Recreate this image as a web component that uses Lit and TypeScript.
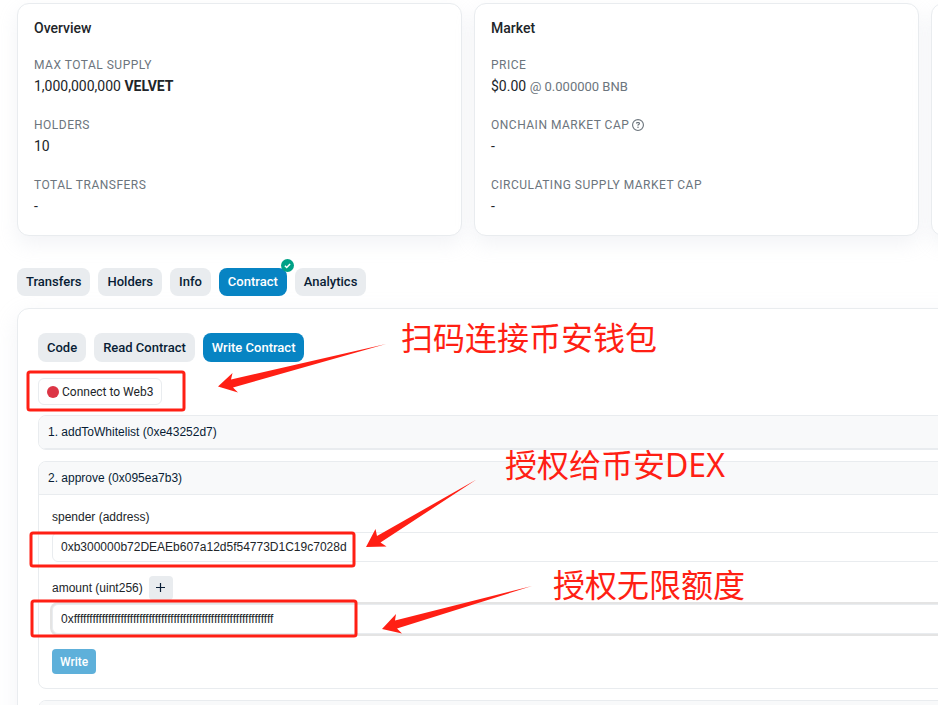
import { LitElement, html, css, svg } from "lit";
import { customElement, property, state } from "lit/decorators.js";
import { classMap } from "lit/directives/class-map.js";

interface Fact {
  label: string;
  value: unknown;
  help?: boolean;
}

const overview: Fact[] = [
  { label: "MAX TOTAL SUPPLY", value: html`1,000,000,000 <b>VELVET</b>` },
  { label: "HOLDERS", value: "10" },
  { label: "TOTAL TRANSFERS", value: "-" },
];

const market: Fact[] = [
  { label: "PRICE", value: html`$0.00 <small>@ 0.000000 BNB</small>` },
  { label: "ONCHAIN MARKET CAP", value: "-", help: true },
  { label: "CIRCULATING SUPPLY MARKET CAP", value: "-" },
];

@customElement("fact-card")
export class FactCard extends LitElement {
  @property() heading = "";
  @property({ attribute: false }) facts: Fact[] = [];

  static styles = css`
    :host {
      display: block;
      box-sizing: border-box;
      min-height: 233px;
      padding: 14px 16px;
      background: #fff;
      border: 1px solid #e9ecef;
      border-radius: 12px;
      box-shadow: 0 8px 19px rgba(189, 197, 209, 0.2);
    }
    .heading {
      margin: 0 0 18px;
      font-size: 14px;
      line-height: 20px;
      font-weight: 500;
    }
    .facts {
      display: grid;
      gap: 18px;
      margin: 0;
    }
    .label {
      display: flex;
      align-items: center;
      gap: 3px;
      font-size: 12px;
      line-height: 18px;
      letter-spacing: 0.5px;
      color: #6c757d;
    }
    .value {
      margin: 0;
      font-size: 14px;
      line-height: 24px;
    }
    .value small {
      font-size: 13px;
      line-height: 1;
      color: #6c757d;
    }
    .help {
      width: 12px;
      height: 12px;
    }
  `;

  render() {
    return html`
      ${this.heading ? html`<h3 class="heading">${this.heading}</h3>` : ""}
      <dl class="facts">
        ${this.facts.map(
          (f) => html`<div>
            <dt class="label">
              ${f.label}
              ${f.help
                ? html`<svg class="help" viewBox="0 0 512 512" fill="currentColor" aria-hidden="true">
                    <path fill-rule="evenodd" d="M256 0a256 256 0 1 0 0 512 256 256 0 0 0 0-512zm0 464a208 208 0 1 1 0-416 208 208 0 0 1 0 416z" />
                    <path d="M169 165c8-22 29-37 53-37h58c35 0 63 28 63 63 0 22-12 43-31 55l-32 19c0 13-11 23-24 23s-24-11-24-24v-13c0-9 5-17 12-21l44-25c5-3 8-8 8-14 0-9-7-15-15-15h-58c-3 0-6 2-8 5l-1 1c-4 12-18 19-30 14s-19-18-15-30zM224 352a32 32 0 1 1 64 0 32 32 0 0 1-64 0z" />
                  </svg>`
                : ""}
            </dt>
            <dd class="value">${f.value}</dd>
          </div>`
        )}
      </dl>
    `;
  }
}

@customElement("app-root")
export class AppRoot extends LitElement {
  @state() private tab = "Contract";
  @state() private mode = "Write Contract";

  static styles = css`
    :host {
      display: block;
      position: relative;
      height: 100vh;
      overflow: hidden;
      background: #fff;
      color: #212529;
      font-family: Roboto, "Liberation Sans", sans-serif;
    }
    *,
    ::before {
      box-sizing: border-box;
    }
    button,
    input {
      font-family: inherit;
      color: inherit;
    }
    .page {
      min-width: 1376px;
      padding: 3px 17px 0;
    }
    .cards {
      display: grid;
      grid-template-columns: repeat(3, 1fr);
      gap: 12px;
      margin-right: -17px;
    }
    .tabs {
      display: flex;
      gap: 8px;
    }
    .main-tabs {
      margin: 32px 0 12px;
    }
    .tab {
      position: relative;
      height: 28px;
      padding: 0 9px;
      border: 0;
      border-radius: 8px;
      background: #e9ecef;
      color: #081d35;
      font-size: 13px;
      line-height: 16px;
      font-weight: 500;
    }
    .mode-tabs .tab {
      height: 29px;
    }
    .tab.active {
      background: #0784c3;
      color: #fff;
    }
    .badge {
      position: absolute;
      top: -9px;
      right: -7px;
      width: 13px;
      height: 13px;
    }
    .panel {
      padding: 24px 20px;
      border: 1px solid #e9ecef;
      border-radius: 12px;
      box-shadow: 0 8px 24px rgba(189, 197, 209, 0.2);
    }
    .connect {
      display: flex;
      align-items: center;
      gap: 3px;
      height: 27px;
      margin: 16px 0 10px;
      padding: 0 8px;
      border: 1px solid #e9ecef;
      border-radius: 6px;
      background: #fff;
      font-size: 12px;
    }
    .dot {
      width: 12px;
      height: 12px;
      border-radius: 50%;
      background: #dc3545;
    }
    .method {
      margin-bottom: 11px;
      border: 1px solid #e9ecef;
      border-radius: 8px;
      overflow: hidden;
      font-family: "Liberation Sans", sans-serif;
      font-size: 12px;
    }
    .method-name {
      display: block;
      width: 100%;
      height: 33px;
      padding: 0 9px;
      border: 0;
      border-bottom: 1px solid #e9ecef;
      background: #f8f9fa;
      color: #081d35;
      font-size: 12px;
      text-align: left;
    }
    .form {
      display: grid;
      padding: 12px 13px 14px;
    }
    .label-row {
      display: flex;
      align-items: center;
      gap: 6px;
      height: 19px;
      margin-bottom: 6px;
    }
    .label-row.amount {
      height: 25px;
      margin: 13px 0 4px;
    }
    .add {
      width: 24px;
      height: 24px;
      padding: 6px;
      border: 0;
      border-radius: 4px;
      background: #e9ecef;
      color: #081d35;
    }
    .add svg {
      display: block;
      width: 12px;
      height: 12px;
    }
    .field {
      width: 100%;
      height: 30px;
      padding: 0 8px;
      border: 1px solid #e9ecef;
      border-radius: 6px;
      background: #fff;
      font-size: 12px;
      outline: 0;
    }
    .field.focused {
      box-shadow: 0 0 0 2px #e4e4e4;
    }
    .write {
      justify-self: start;
      height: 25px;
      margin-top: 15px;
      padding: 0 8px;
      border: 0;
      border-radius: 4px;
      background: #5eb0da;
      color: #fff;
      font-family: Roboto, sans-serif;
      font-size: 12px;
      font-weight: 500;
    }
    .notes {
      position: absolute;
      top: 0;
      left: 0;
      width: 938px;
      height: 705px;
      pointer-events: none;
      fill: #ff1f14;
      font-family: "Noto Sans", "Noto Sans CJK SC", sans-serif;
      font-size: 32px;
    }
    .frame {
      fill: none;
      stroke: #ff1f14;
      stroke-width: 3px;
    }
  `;

  private tabButton(name: string, current: string, pick: (n: string) => void, badge = false) {
    return html`<button
      class=${classMap({ tab: true, active: name === current })}
      role="tab"
      aria-selected=${name === current}
      @click=${() => pick(name)}
    >
      ${name}
      ${badge
        ? html`<svg class="badge" viewBox="0 0 13 13" aria-hidden="true">
            <circle cx="6.5" cy="6.5" r="6.5" fill="#00a186" />
            <path d="M3.9 6.7l1.8 1.8 3.4-3.6" fill="none" stroke="#fff" stroke-width="1.5" />
          </svg>`
        : ""}
    </button>`;
  }

  private notes() {
    const frames = [
      [28, 372, 156, 38],
      [31, 533, 323, 33],
      [32, 601, 324, 35],
    ];
    const arrows = [
      "M218 386.500L232.500 373L231 379.500L386 344L233 387.500L238 392.500Z",
      "M366 547L375.500 529L377 536L476.500 479.500L380.500 542.500L386.500 546.500Z",
      "M382 629L396 614L395 620.500L532 586L397 628.500L402 633.500Z",
    ];
    return html`<svg class="notes" viewBox="0 0 938 705">
      ${frames.map(([x, y, w, h]) => svg`<rect class="frame" x=${x} y=${y} width=${w} height=${h} rx="2" />`)}
      ${arrows.map((d) => svg`<path d=${d} />`)}
      <text x="401" y="350">扫码连接币安钱包</text>
      <text x="505" y="477">授权给币安DEX</text>
      <text x="553" y="597">授权无限额度</text>
    </svg>`;
  }

  render() {
    const pickTab = (n: string) => (this.tab = n);
    const pickMode = (n: string) => (this.mode = n);
    return html`
      <main class="page">
        <section class="cards">
          <fact-card heading="Overview" .facts=${overview}></fact-card>
          <fact-card heading="Market" .facts=${market}></fact-card>
          <fact-card></fact-card>
        </section>
        <nav class="tabs main-tabs" role="tablist">
          ${["Transfers", "Holders", "Info", "Contract", "Analytics"].map((n) =>
            this.tabButton(n, this.tab, pickTab, n === "Contract")
          )}
        </nav>
        <section class="panel">
          <nav class="tabs mode-tabs" role="tablist">
            ${["Code", "Read Contract", "Write Contract"].map((n) => this.tabButton(n, this.mode, pickMode))}
          </nav>
          <button class="connect"><span class="dot"></span>Connect to Web3</button>
          <div class="method"><button class="method-name">1. addToWhitelist (0xe43252d7)</button></div>
          <div class="method">
            <button class="method-name">2. approve (0x095ea7b3)</button>
            <form class="form" @submit=${(e: Event) => e.preventDefault()}>
              <div class="label-row"><label for="spender">spender (address)</label></div>
              <input class="field" id="spender" value="0xb300000b72DEAEb607a12d5f54773D1C19c7028d" />
              <div class="label-row amount">
                <label for="amount">amount (uint256)</label>
                <button class="add" type="button" aria-label="Add zeros">
                  <svg viewBox="0 0 12 12" aria-hidden="true">
                    <path d="M5.500 1v9M1 5.500h9" stroke="currentColor" stroke-width="1.200" />
                  </svg>
                </button>
              </div>
              <input class="field focused" id="amount" value=${"0x" + "f".repeat(64)} />
              <button class="write">Write</button>
            </form>
          </div>
          <div class="method"><button class="method-name" aria-label="Next method"></button></div>
        </section>
      </main>
      ${this.notes()}
    `;
  }
}
